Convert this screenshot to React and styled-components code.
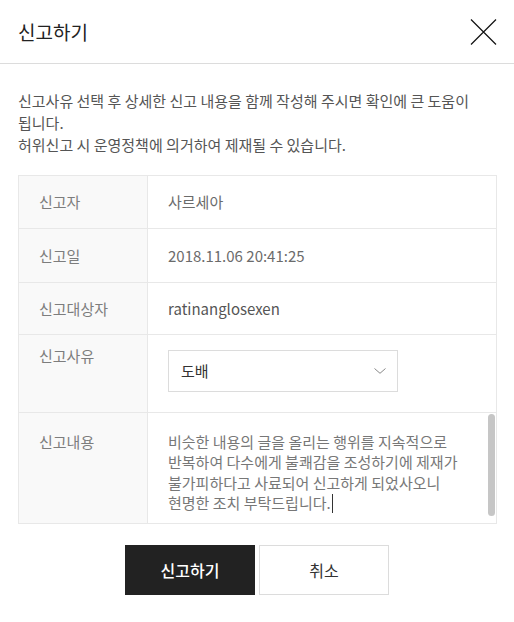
import React from 'react';
import styled, { createGlobalStyle } from 'styled-components';

const GlobalStyle = createGlobalStyle`
  html, body {
    margin: 0;
    padding: 0;
    background: #fff;
  }
  body {
    font-family: "Noto Sans CJK KR", "Noto Sans", sans-serif;
    -webkit-font-smoothing: antialiased;
  }
`;

const Modal = styled.section`
  width: 514px;
  background: #fff;
`;

const Header = styled.header`
  height: 63px;
  display: flex;
  align-items: center;
  justify-content: space-between;
  padding: 0 17px 0 18px;
  border-bottom: 1px solid #dcdcdc;
`;

const Title = styled.h1`
  margin: 0;
  font-size: 19px;
  font-weight: 400;
  color: #222;
  line-height: 24px;
`;

const CloseButton = styled.button`
  width: 27px;
  height: 28px;
  padding: 0;
  border: 0;
  background: none;
  display: flex;
  align-items: center;
  justify-content: center;
  cursor: pointer;
`;

const Notice = styled.p`
  margin: 26px 18px 19px;
  font-size: 15px;
  line-height: 22px;
  color: #555;
`;

const InfoTable = styled.table`
  width: 479px;
  margin: 0 18px;
  border-collapse: collapse;
  table-layout: fixed;
  font-size: 15px;
`;

const Row = styled.tr`
  height: ${(p) => p.$h}px;
`;

const Label = styled.th`
  width: 108px;
  padding: ${(p) => (p.$top ? `${p.$top}px 0 0 20px` : '0 0 0 20px')};
  vertical-align: ${(p) => (p.$top ? 'top' : 'middle')};
  text-align: left;
  font-weight: 400;
  line-height: 20px;
  color: #7d7d7d;
  background: #f9f9f9;
  border: 1px solid #e8e8e8;
`;

const Value = styled.td`
  padding: ${(p) => (p.$top != null ? `${p.$top}px 0 0 20px` : '0 0 0 20px')};
  vertical-align: ${(p) => (p.$top != null ? 'top' : 'middle')};
  line-height: 20px;
  color: ${(p) => p.$color || '#6b6b6b'};
  border: 1px solid #e8e8e8;
`;

const Select = styled.div`
  width: 230px;
  height: 42px;
  box-sizing: border-box;
  border: 1px solid #dcdcdc;
  display: flex;
  align-items: center;
  justify-content: space-between;
  padding: 0 11px 0 12px;
  font-size: 15px;
  color: #333;
`;

const ContentBox = styled.div`
  position: relative;
  height: 110px;
  box-sizing: border-box;
  padding: 19px 30px 0 20px;
  font-size: 15px;
  line-height: 20.4px;
  color: #777;
  white-space: pre-line;
`;

const Caret = styled.span`
  display: inline-block;
  width: 1px;
  height: 19px;
  margin-left: 1px;
  background: #333;
  vertical-align: -4px;
`;

const ScrollThumb = styled.span`
  position: absolute;
  top: 1px;
  right: 1px;
  width: 7px;
  height: 102px;
  border-radius: 4px;
  background: #c6c6c6;
`;

const Actions = styled.div`
  display: flex;
  justify-content: center;
  gap: 4px;
  margin-top: 21px;
`;

const ActionButton = styled.button`
  width: 130px;
  height: 50px;
  box-sizing: border-box;
  font-family: inherit;
  font-size: 16px;
  font-weight: ${(p) => (p.$primary ? 500 : 400)};
  color: ${(p) => (p.$primary ? '#fff' : '#333')};
  background: ${(p) => (p.$primary ? '#222' : '#fff')};
  border: 1px solid ${(p) => (p.$primary ? '#222' : '#dcdcdc')};
  cursor: pointer;
`;

const App = () => {
  return (
    <Modal>
      <GlobalStyle />
      <Header>
        <Title>신고하기</Title>
        <CloseButton aria-label="닫기">
          <svg width="27" height="28" viewBox="0 0 27 28">
            <path d="M1 1.5L26 26.5M26 1.5L1 26.5" stroke="#111" strokeWidth="1.2" fill="none" />
          </svg>
        </CloseButton>
      </Header>

      <Notice>
        신고사유 선택 후 상세한 신고 내용을 함께 작성해 주시면 확인에 큰 도움이
        <br />
        됩니다.
        <br />
        허위신고 시 운영정책에 의거하여 제재될 수 있습니다.
      </Notice>

      <InfoTable>
        <tbody>
          <Row $h={53}>
            <Label>신고자</Label>
            <Value>사르세아</Value>
          </Row>
          <Row $h={54}>
            <Label>신고일</Label>
            <Value>2018.11.06 20:41:25</Value>
          </Row>
          <Row $h={52}>
            <Label>신고대상자</Label>
            <Value $color="#555">ratinanglosexen</Value>
          </Row>
          <Row $h={78}>
            <Label $top={11}>신고사유</Label>
            <Value $top={15}>
              <Select>
                도배
                <svg width="12" height="6" viewBox="0 0 12 6">
                  <path d="M0.5 0.5L6 5.3L11.5 0.5" stroke="#888" strokeWidth="1" fill="none" />
                </svg>
              </Select>
            </Value>
          </Row>
          <Row $h={111}>
            <Label $top={19}>신고내용</Label>
            <Value $top={0} style={{ padding: 0 }}>
              <ContentBox>
                {'비슷한 내용의 글을 올리는 행위를 지속적으로\n반복하여 다수에게 불쾌감을 조성하기에 제재가\n불가피하다고 사료되어 신고하게 되었사오니\n현명한 조치 부탁드립니다.'}
                <Caret />
                <ScrollThumb />
              </ContentBox>
            </Value>
          </Row>
        </tbody>
      </InfoTable>

      <Actions>
        <ActionButton $primary>신고하기</ActionButton>
        <ActionButton>취소</ActionButton>
      </Actions>
    </Modal>
  );
};

export default App;
